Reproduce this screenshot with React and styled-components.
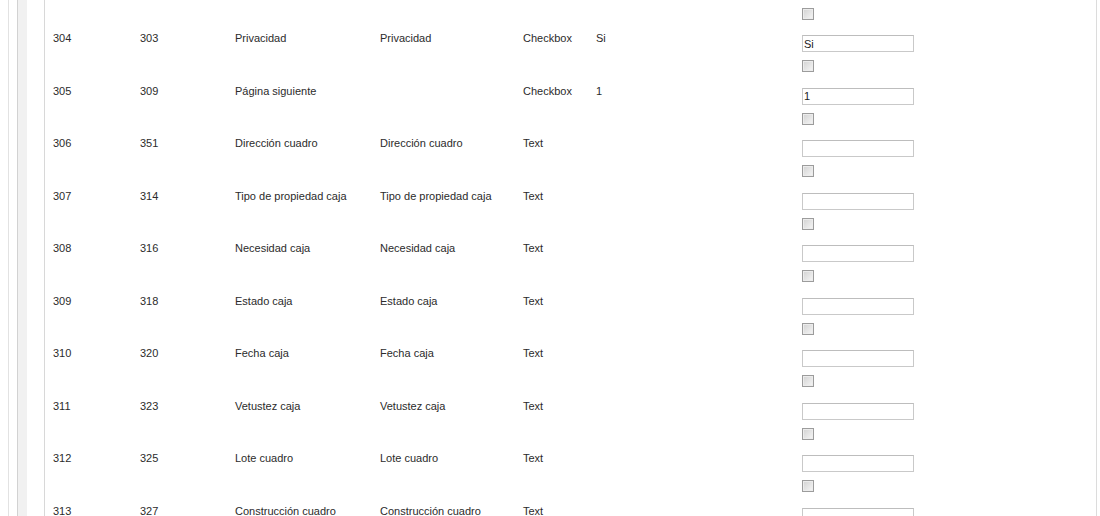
import styled, { createGlobalStyle } from 'styled-components'

const rows = [
  { id: '304', field: '303', name: 'Privacidad', label: 'Privacidad', type: 'Checkbox', value: 'Si' },
  { id: '305', field: '309', name: 'Página siguiente', label: '', type: 'Checkbox', value: '1' },
  { id: '306', field: '351', name: 'Dirección cuadro', label: 'Dirección cuadro', type: 'Text', value: '' },
  { id: '307', field: '314', name: 'Tipo de propiedad caja', label: 'Tipo de propiedad caja', type: 'Text', value: '' },
  { id: '308', field: '316', name: 'Necesidad caja', label: 'Necesidad caja', type: 'Text', value: '' },
  { id: '309', field: '318', name: 'Estado caja', label: 'Estado caja', type: 'Text', value: '' },
  { id: '310', field: '320', name: 'Fecha caja', label: 'Fecha caja', type: 'Text', value: '' },
  { id: '311', field: '323', name: 'Vetustez caja', label: 'Vetustez caja', type: 'Text', value: '' },
  { id: '312', field: '325', name: 'Lote cuadro', label: 'Lote cuadro', type: 'Text', value: '' },
  { id: '313', field: '327', name: 'Construcción cuadro', label: 'Construcción cuadro', type: 'Text', value: '' },
]

const App = () => (
  <>
    <GlobalStyle />
    <Frame>
      <Sidebar />
      <Content>
        <TailRow>
          <EditCell>
            <Check type="checkbox" $first />
          </EditCell>
        </TailRow>
        {rows.map(row => (
          <Row key={row.id}>
            <Cell>{row.id}</Cell>
            <Cell>{row.field}</Cell>
            <Cell>{row.name}</Cell>
            <Cell>{row.label}</Cell>
            <Cell>{row.type}</Cell>
            <Cell>{row.value}</Cell>
            <EditCell>
              <TextInput type="text" defaultValue={row.value} />
              <Check type="checkbox" />
            </EditCell>
          </Row>
        ))}
      </Content>
    </Frame>
  </>
)

export default App

const GlobalStyle = createGlobalStyle`
  html, body {
    margin: 0;
    height: 516px;
    overflow: hidden;
    background: #fff;
  }
  body {
    font-family: "Liberation Sans", Arial, sans-serif;
    font-size: 11px;
    color: #2b2b2b;
  }
`

const Frame = styled.div`
  box-sizing: border-box;
  display: flex;
  width: 1089px;
  height: 516px;
  margin-left: 8px;
  padding-left: 8px;
  border-left: 1px solid #e2e2e2;
  border-right: 1px solid #dcdcdc;
  overflow: hidden;
`

const Sidebar = styled.div`
  flex: 0 0 9px;
  border-left: 1px solid #d2d2d2;
  background: #f1f1f1;
  margin-right: 17px;
`

const Content = styled.div`
  flex: 1;
  border-left: 1px solid #d8d8d8;
  padding-left: 8px;
`

const Row = styled.div`
  display: grid;
  grid-template-columns: 87px 95px 145px 143px 73px 206px 1fr;
  height: 52.5px;
`

const TailRow = styled(Row)`
  height: 26px;
`

const Cell = styled.div`
  padding-top: 6px;
  line-height: 13px;
  white-space: nowrap;
`

const EditCell = styled.div`
  grid-column: 7;
  display: flex;
  flex-direction: column;
  align-items: flex-start;
  padding-top: 9px;
`

const TextInput = styled.input`
  box-sizing: border-box;
  width: 112px;
  height: 17px;
  margin: 0;
  padding: 0 1px;
  border: 1px solid #c9c9c9;
  border-top-color: #bdbdbd;
  font-family: "Liberation Sans", Arial, sans-serif;
  font-size: 11px;
  color: #222;
  outline: none;
`

const Check = styled.input`
  appearance: none;
  box-sizing: border-box;
  width: 12px;
  height: 12px;
  margin: ${props => (props.$first ? '-1px' : '8px')} 0 0 0;
  border: 1px solid #9c9c9c;
  box-shadow: inset 0 0 0 1px #ececec;
  background: linear-gradient(135deg, #d2d2d2 0%, #f6f6f6 100%);
`
